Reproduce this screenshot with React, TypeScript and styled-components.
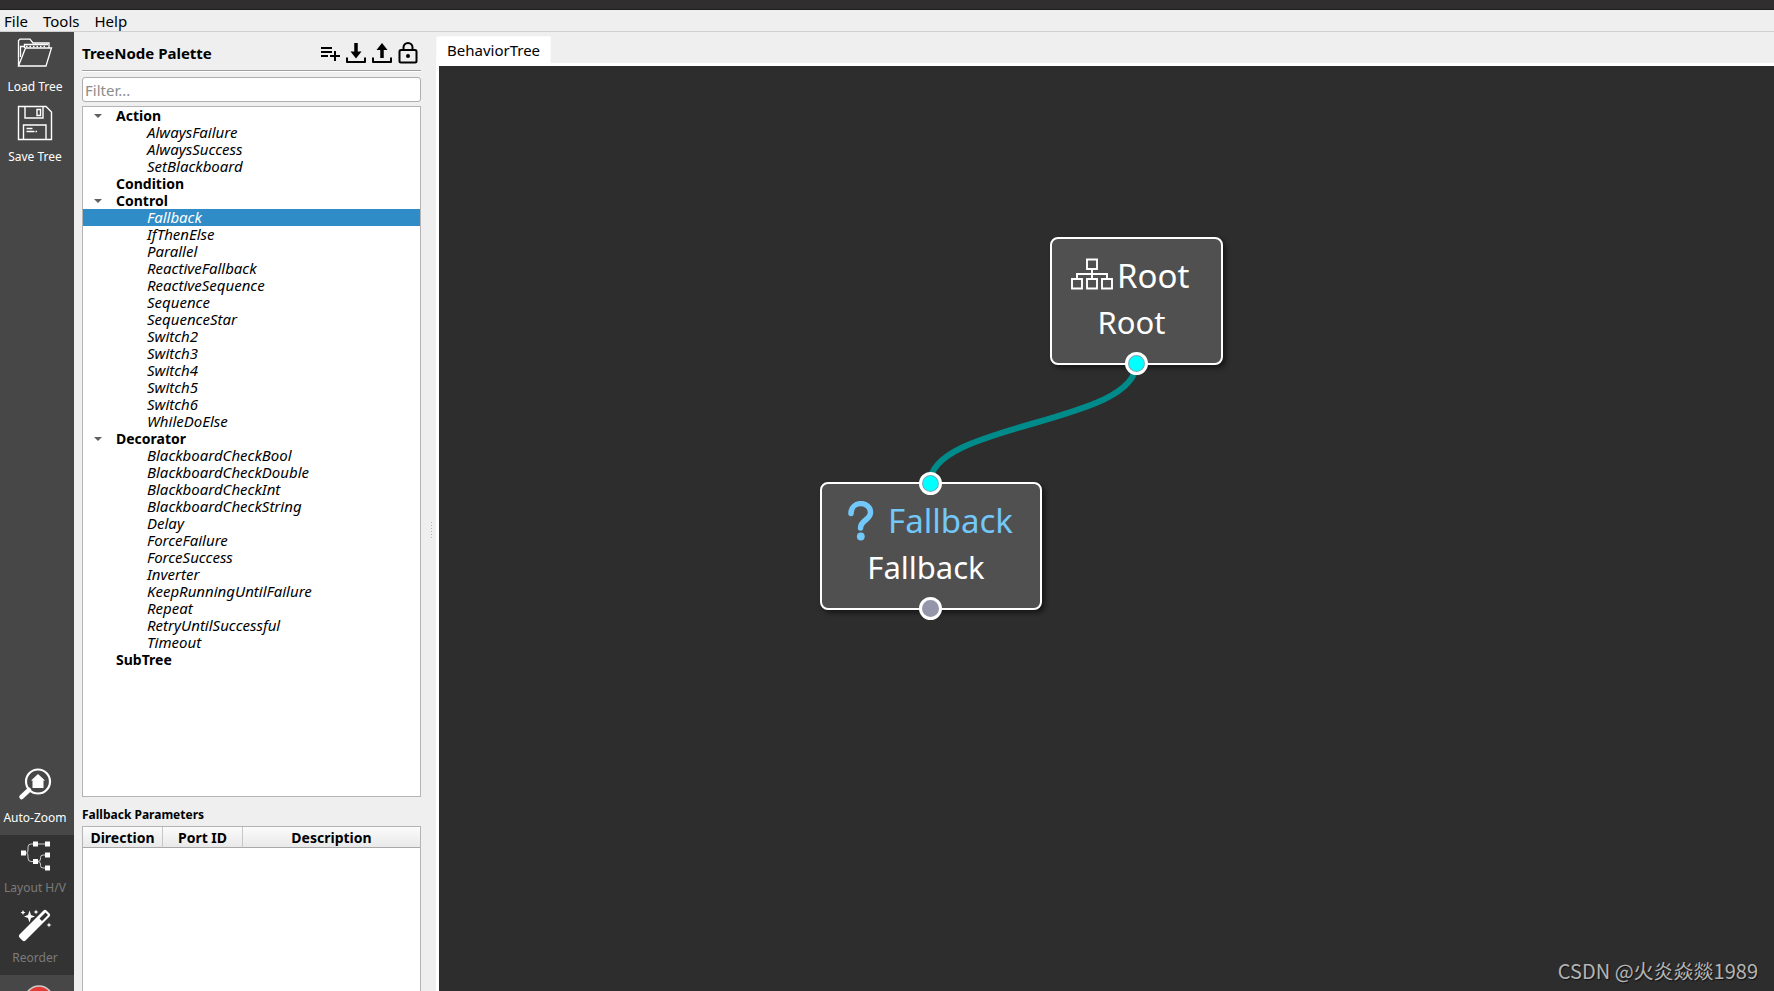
import React, { useState } from "react";
import styled, { createGlobalStyle, css } from "styled-components";

const GlobalStyle = createGlobalStyle`
  *, *::before, *::after { box-sizing: border-box; }
  body { margin: 0; background: #efefef; }
  button, input, table { font: inherit; color: inherit; }
  ul { list-style: none; margin: 0; padding: 0; }
`;

const Window = styled.div`
  display: flex;
  flex-direction: column;
  height: 100vh;
  overflow: hidden;
  background: #efefef;
  color: #000;
  font: 14px/17px "Noto Sans", "Open Sans", sans-serif;
`;

const TitleBar = styled.div`
  flex: 0 0 10px;
  background: #302e2f;
  border-bottom: 1px solid #1f1d1e;
`;

const MenuBar = styled.nav`
  display: flex;
  flex: 0 0 22px;
  gap: 15px;
  padding: 0 4px;
  border-bottom: 1px solid #d0d0d0;
`;

const MenuButton = styled.button`
  padding: 0;
  border: 0;
  background: none;
  font-size: 15px;
  line-height: 20px;
`;

const Workspace = styled.div`
  display: flex;
  flex: 1;
  min-height: 0;
`;

const Sidebar = styled.aside`
  display: flex;
  flex: 0 0 74px;
  flex-direction: column;
  justify-content: space-between;
  overflow: hidden;
  background: #474747;
`;

const ToolGroup = styled.div`
  display: flex;
  flex-direction: column;
`;

const DisabledGroup = styled(ToolGroup)`
  background: #333;
`;

const ToolButton = styled.button<{ $compact?: boolean }>`
  display: flex;
  flex-direction: column;
  align-items: center;
  gap: 8px;
  height: 70px;
  padding: ${(p) => (p.$compact ? 1 : 3)}px 4px 0 0;
  border: 0;
  background: none;
  color: #fff;
  font-size: 12px;
  line-height: 16px;
  white-space: nowrap;
  svg { display: block; flex: none; }
  &:disabled { color: #7b7b7b; }
`;

const RecordButton = styled.button`
  display: flex;
  justify-content: center;
  height: 16px;
  padding: 10px 0 0 4px;
  border: 0;
  background: none;
  overflow: hidden;
  svg { flex: none; }
`;

const PalettePane = styled.section`
  display: flex;
  flex: 0 0 347px;
  flex-direction: column;
  min-height: 0;
  padding-left: 8px;
`;

const PaletteHeader = styled.header`
  display: flex;
  align-items: center;
  justify-content: space-between;
  height: 38px;
  padding: 4px 2px 0 0;
`;

const Heading = styled.h2<{ $small?: boolean }>`
  margin: 0;
  font-size: ${(p) => (p.$small ? 12 : 15)}px;
  font-weight: 700;
`;

const IconRow = styled.div`
  display: flex;
  gap: 4px;
`;

const IconButton = styled.button`
  width: 22px;
  height: 24px;
  padding: 0;
  border: 0;
  background: none;
  svg { display: block; }
`;

const Rule = styled.hr`
  width: 100%;
  height: 2px;
  margin: 0 0 5px;
  border: 0;
  border-top: 1px solid #a0a0a0;
  border-bottom: 1px solid #fff;
`;

const FilterInput = styled.input`
  flex: none;
  width: 100%;
  height: 25px;
  margin-bottom: 4px;
  padding: 0 2px;
  border: 1px solid #aeaeae;
  border-radius: 3px;
  background: #fff;
  font-size: 15px;
  &::placeholder { color: #8c8c8c; opacity: 1; }
`;

const TreeBox = styled.ul`
  flex: 1;
  min-height: 0;
  overflow: hidden;
  border: 1px solid #b4b4b4;
  background: #fff;
`;

const rowStyle = css`
  display: flex;
  align-items: center;
  width: 100%;
  height: 17px;
  border: 0;
  background: none;
  text-align: left;
  line-height: 17px;
`;

const CategoryRow = styled.button`
  ${rowStyle}
  gap: 14px;
  padding: 0 0 0 11px;
  font-weight: 700;
`;

const Arrow = styled.svg<{ $shown: boolean }>`
  width: 8px;
  height: 4px;
  visibility: ${(p) => (p.$shown ? "visible" : "hidden")};
`;

const LeafRow = styled.button<{ $selected: boolean }>`
  ${rowStyle}
  padding: 0 0 0 64px;
  font-size: 15px;
  font-style: italic;
  ${(p) => p.$selected && css`
    background: #308cc6;
    color: #fff;
  `}
`;

const Parameters = styled.section`
  display: flex;
  flex: 0 0 194px;
  flex-direction: column;
  padding-top: 9px;
  overflow: hidden;
`;

const TableBox = styled.div`
  flex: 1;
  margin-top: 3px;
  border: 1px solid #b4b4b4;
  border-bottom: 0;
  background: #fff;
`;

const ParamTable = styled.table`
  width: 100%;
  border-collapse: separate;
  border-spacing: 0;
  table-layout: fixed;
  th {
    height: 21px;
    padding: 0;
    border-bottom: 1px solid #a8a8a8;
    background: linear-gradient(#fbfbfb, #e9e9e9);
    font-weight: 700;
  }
  th + th { border-left: 1px solid #c6c6c6; }
`;

const Splitter = styled.div`
  display: flex;
  flex: 0 0 15px;
  align-items: center;
  justify-content: flex-end;
  padding: 38px 4px 0 0;
`;

const Grip = styled.div`
  width: 1px;
  height: 17px;
  background: repeating-linear-gradient(#b5b5b5 0 1px, transparent 1px 3px);
`;

const EditorPane = styled.main`
  display: flex;
  flex: 1;
  flex-direction: column;
  min-width: 0;
`;

const TabBar = styled.div`
  display: flex;
  flex: 0 0 31px;
  padding-top: 4px;
`;

const Tab = styled.button`
  padding: 0 10px;
  border: 1px solid #fafafa;
  border-bottom: 0;
  border-radius: 2px 2px 0 0;
  background: #fff;
  font-size: 15px;
  line-height: 17px;
`;

const Canvas = styled.div`
  position: relative;
  flex: 1;
  overflow: hidden;
  border-top: 3px solid #fff;
  border-left: 3px solid #fff;
  background: #2d2d2d;
`;

const Wire = styled.svg`
  position: absolute;
  left: 0;
  top: 0;
  width: 100%;
  height: 100%;
`;

const Node = styled.article<{ $x: number; $y: number; $w: number }>`
  position: absolute;
  left: ${(p) => p.$x}px;
  top: ${(p) => p.$y}px;
  width: ${(p) => p.$w}px;
  height: 128px;
  padding-top: 14px;
  border: 2px solid #fff;
  border-radius: 8px;
  background: #505050;
  box-shadow: 3px 3px 5px rgba(0, 0, 0, 0.5);
  color: #fff;
`;

const NodeTitle = styled.div<{ $color: string; $gap: number; $indent: number }>`
  display: flex;
  align-items: center;
  gap: ${(p) => p.$gap}px;
  height: 46px;
  padding-left: ${(p) => p.$indent}px;
  color: ${(p) => p.$color};
  font-size: 33px;
  line-height: 46px;
  svg { flex: none; }
`;

const NodeName = styled.div`
  padding-right: 10px;
  font-size: 31px;
  line-height: 46px;
  text-align: center;
`;

const Port = styled.span<{ $top?: boolean; $connected?: boolean }>`
  position: absolute;
  left: 50%;
  ${(p) => (p.$top ? "top: -12px;" : "bottom: -12px;")}
  width: 23px;
  height: 23px;
  margin-left: -12px;
  border: 3px solid #fff;
  border-radius: 50%;
  background: ${(p) => (p.$connected ? "#00ffff" : "#9696aa")};
  box-shadow: inset 0 0 0 1px #9696aa;
`;

const Watermark = styled.footer`
  position: absolute;
  right: 16px;
  bottom: 7px;
  color: #b4b4b4;
  font: 20px/26px "Noto Sans CJK SC", sans-serif;
  text-shadow: 1px 1px 1px #111;
`;

const categories = [
  { name: "Action", items: ["AlwaysFailure", "AlwaysSuccess", "SetBlackboard"] },
  { name: "Condition", items: [] },
  {
    name: "Control",
    items: [
      "Fallback", "IfThenElse", "Parallel", "ReactiveFallback", "ReactiveSequence", "Sequence",
      "SequenceStar", "Switch2", "Switch3", "Switch4", "Switch5", "Switch6", "WhileDoElse",
    ],
  },
  {
    name: "Decorator",
    items: [
      "BlackboardCheckBool", "BlackboardCheckDouble", "BlackboardCheckInt", "BlackboardCheckString",
      "Delay", "ForceFailure", "ForceSuccess", "Inverter", "KeepRunningUntilFailure", "Repeat",
      "RetryUntilSuccessful", "Timeout",
    ],
  },
  { name: "SubTree", items: [] },
];

const FolderIcon = () => (
  <svg width="36" height="36" viewBox="0 0 36 36" fill="none" stroke="#fff" strokeWidth="1.3">
    <path d="M1.5 31V5.5L3 4.2h10l3 3.8h16v4.500M1.500 31 8.500 13H34.500L29 31Z" />
    <path d="M3.500 22V11.500h4M7.500 13V9.500H31" />
    <path d="M9 11.500H30" strokeDasharray="1.500 2" />
  </svg>
);

const SaveIcon = () => (
  <svg width="36" height="36" viewBox="0 0 36 36" fill="none" stroke="#fff" strokeWidth="1.4">
    <path d="M1.500 1.500H29L34.500 7V34.500H1.500Z" />
    <path d="M8 2V13H26V2M20 4.500h3.500v6H20ZM6.500 34V20H29V34M9.500 23.500h6M9.500 26.500h8M18.500 26.500h1.500" />
  </svg>
);

const ZoomIcon = () => (
  <svg width="36" height="36" viewBox="0 0 36 36" fill="none">
    <circle cx="21" cy="15.500" r="12" stroke="#fff" strokeWidth="2.200" />
    <path d="M12 24 4.500 31" stroke="#fff" strokeWidth="4.500" strokeLinecap="round" />
    <path d="M21 8 28 14.500H26.500V22H15.500V14.500H14Z" fill="#fff" />
  </svg>
);

const LayoutIcon = () => (
  <svg width="36" height="36" viewBox="0 0 36 36" fill="none">
    <path
      d="M6 17H9.500Q11 17 11 14V11Q11 8 14 8H30M9.500 17Q11 17 11 20V22Q11 25.500 14 25.500H20.500Q23.500 25.500 23.500 23V21.500Q23.500 19 26 19H30M20.500 25.500Q23.500 25.500 23.500 28V29.500Q23.500 32 26 32H30"
      stroke="#ccc" strokeWidth="1"
    />
    <path
      d="M4 14.500h5v5H4ZM16 5.500h5v5h-5ZM28 5.500h5v5h-5ZM28 16.500h5v5h-5ZM16 23h5v5h-5ZM28 29.500h5v5h-5Z"
      fill="#fff"
    />
  </svg>
);

const WandIcon = () => (
  <svg width="36" height="36" viewBox="0 0 36 36" fill="#fff">
    <path
      fillRule="evenodd"
      d="M2.500 28.500 26.500 4.500Q28 3 29.500 4.500L32.500 7.500Q34 9 32.500 10.500L8.500 34.500Q7 36 5.500 34.500L2.500 31.500Q1 30 2.500 28.500ZM22.500 12.500 25 15 31 9 28.500 6.500Z"
    />
    <path d="M12.500 4.500 14 9 18 10.500 14 12 12.500 16.500 11 12 7 10.500 11 9ZM6 4l.8 1.700 1.700.8-1.700.8L6 9l-.8-1.700-1.700-.8 1.700-.8ZM19 3.500l.7 1.800 1.800.7-1.800.7L19 8.500l-.7-1.800-1.800-.7 1.800-.7ZM32 16.500l.7 1.800 1.800.7-1.800.7-.7 1.800-.7-1.800-1.800-.7 1.800-.7Z" />
  </svg>
);

const RootIcon = () => (
  <svg width="42" height="36" viewBox="0 0 42 36" fill="none" stroke="#fff" strokeWidth="1.900">
    <path d="M16 1.500H26V11H16ZM1 21H11V30.500H1ZM16 21H26V30.500H16ZM31 21H41V30.500H31ZM21 11V21M6 21V16H36V21" />
  </svg>
);

const QuestionIcon = () => (
  <svg width="26" height="40" viewBox="0 0 26 40" fill="none">
    <path d="M3 12.500C3 -.5 22.500 -.5 22.500 11.500C22.500 19 12.500 19 12.500 27" stroke="#73c8fa" strokeWidth="5.500" strokeLinecap="round" />
    <circle cx="12.800" cy="35.500" r="3.900" fill="#73c8fa" />
  </svg>
);

const AddIcon = () => (
  <svg width="22" height="24" viewBox="0 0 22 24" fill="none" stroke="#000" strokeWidth="2">
    <path d="M2 7H13M2 11H13M2 15H9M16 10V20M11 15H21" />
  </svg>
);

const TrayIcon = ({ up = false }: { up?: boolean }) => (
  <svg width="22" height="24" viewBox="0 0 22 24" fill="none" stroke="#000">
    <path d="M2 16.500V21H20V16.500" strokeWidth="2" strokeLinejoin="round" />
    {up ? (
      <>
        <path d="M11 17V7" strokeWidth="3.500" />
        <path d="M5.500 9 11 2 16.500 9Z" fill="#000" stroke="none" />
      </>
    ) : (
      <>
        <path d="M11 2V12" strokeWidth="3.500" />
        <path d="M5.500 10.500 11 17.500 16.500 10.500Z" fill="#000" stroke="none" />
      </>
    )}
  </svg>
);

const LockIcon = () => (
  <svg width="22" height="24" viewBox="0 0 22 24" fill="none" stroke="#000" strokeWidth="2">
    <rect x="2.500" y="9" width="17" height="12.500" rx="1.500" />
    <path d="M6.500 9V6.500a4.500 4.500 0 0 1 9 0V9" />
    <circle cx="11" cy="15" r="2" fill="#000" stroke="none" />
  </svg>
);

export default function App() {
  const [selected, setSelected] = useState("Fallback");
  const [filter, setFilter] = useState("");
  const [closed, setClosed] = useState<string[]>([]);

  const toggle = (name: string) =>
    setClosed((c) => (c.includes(name) ? c.filter((n) => n !== name) : [...c, name]));

  return (
    <Window>
      <GlobalStyle />
      <TitleBar />
      <MenuBar>
        <MenuButton>File</MenuButton>
        <MenuButton>Tools</MenuButton>
        <MenuButton>Help</MenuButton>
      </MenuBar>
      <Workspace>
        <Sidebar>
          <ToolGroup>
            <ToolButton><FolderIcon />Load Tree</ToolButton>
            <ToolButton><SaveIcon />Save Tree</ToolButton>
          </ToolGroup>
          <ToolGroup>
            <ToolButton $compact><ZoomIcon />Auto-Zoom</ToolButton>
            <DisabledGroup>
              <ToolButton $compact disabled><LayoutIcon />Layout H/V</ToolButton>
              <ToolButton $compact disabled><WandIcon />Reorder</ToolButton>
            </DisabledGroup>
            <RecordButton aria-label="Record">
              <svg width="30" height="30" viewBox="0 0 30 30">
                <circle cx="15" cy="15" r="14" fill="#e53935" stroke="#ccc" strokeWidth="1.500" />
              </svg>
            </RecordButton>
          </ToolGroup>
        </Sidebar>

        <PalettePane>
          <PaletteHeader>
            <Heading>TreeNode Palette</Heading>
            <IconRow>
              <IconButton aria-label="Add node"><AddIcon /></IconButton>
              <IconButton aria-label="Import"><TrayIcon /></IconButton>
              <IconButton aria-label="Export"><TrayIcon up /></IconButton>
              <IconButton aria-label="Lock"><LockIcon /></IconButton>
            </IconRow>
          </PaletteHeader>
          <Rule />
          <FilterInput
            aria-label="Filter"
            placeholder="Filter..."
            value={filter}
            onChange={(e) => setFilter(e.target.value)}
          />
          <TreeBox>
            {categories.map(({ name, items }) => (
              <li key={name}>
                <CategoryRow onClick={() => toggle(name)}>
                  <Arrow $shown={items.length > 0} viewBox="0 0 8 4">
                    <path d="M0 0H8L4 4Z" fill="#606060" />
                  </Arrow>
                  {name}
                </CategoryRow>
                {!closed.includes(name) && (
                  <ul>
                    {items
                      .filter((item) => item.toLowerCase().includes(filter.toLowerCase()))
                      .map((item) => (
                        <li key={item}>
                          <LeafRow $selected={item === selected} onClick={() => setSelected(item)}>
                            {item}
                          </LeafRow>
                        </li>
                      ))}
                  </ul>
                )}
              </li>
            ))}
          </TreeBox>
          <Parameters>
            <Heading $small>{selected} Parameters</Heading>
            <TableBox>
              <ParamTable>
                <colgroup>
                  <col width="79" />
                  <col width="80" />
                  <col />
                </colgroup>
                <thead>
                  <tr>
                    <th>Direction</th>
                    <th>Port ID</th>
                    <th>Description</th>
                  </tr>
                </thead>
              </ParamTable>
            </TableBox>
          </Parameters>
        </PalettePane>
        <Splitter><Grip /></Splitter>

        <EditorPane>
          <TabBar>
            <Tab>BehaviorTree</Tab>
          </TabBar>
          <Canvas>
            <Wire>
              <path d="M697 298C697 358 491 357 491 417" fill="none" stroke="#008b8b" strokeWidth="6" />
            </Wire>
            <Node $x={611} $y={171} $w={173}>
              <NodeTitle $color="#fff" $gap={4} $indent={19}><RootIcon />Root</NodeTitle>
              <NodeName>Root</NodeName>
              <Port $connected />
            </Node>
            <Node $x={381} $y={416} $w={222}>
              <NodeTitle $color="#73c8fa" $gap={14} $indent={26}>
                <QuestionIcon />Fallback
              </NodeTitle>
              <NodeName>Fallback</NodeName>
              <Port $top $connected />
              <Port />
            </Node>
            <Watermark>CSDN @火炎焱燚1989</Watermark>
          </Canvas>
        </EditorPane>
      </Workspace>
    </Window>
  );
}
